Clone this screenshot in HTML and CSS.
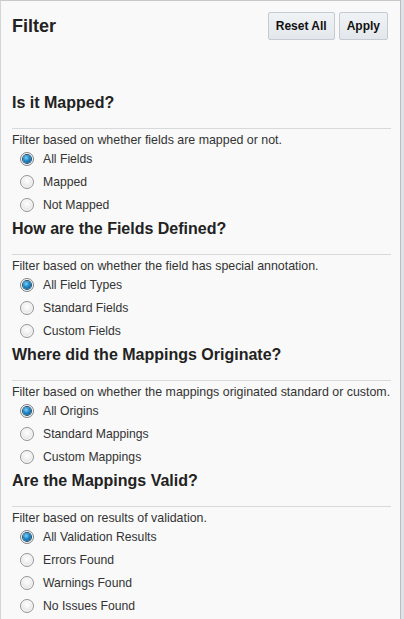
FILE: index.html
```html
<!DOCTYPE html>
<html>
<head>
<meta charset="utf-8">
<link rel="stylesheet" href="styles.css">
</head>
<body>
<div class="panel">
  <div class="header">
    <h1 class="title">Filter</h1>
    <div class="actions">
      <button class="btn">Reset All</button>
      <button class="btn">Apply</button>
    </div>
  </div>

  <div class="section">
    <h2 class="heading">Is it Mapped?</h2>
    <div class="rule"></div>
    <p class="desc">Filter based on whether fields are mapped or not.</p>
    <ul class="options">
      <li class="option"><span class="radio checked"></span>All Fields</li>
      <li class="option"><span class="radio"></span>Mapped</li>
      <li class="option"><span class="radio"></span>Not Mapped</li>
    </ul>
  </div>

  <div class="section">
    <h2 class="heading">How are the Fields Defined?</h2>
    <div class="rule"></div>
    <p class="desc">Filter based on whether the field has special annotation.</p>
    <ul class="options">
      <li class="option"><span class="radio checked"></span>All Field Types</li>
      <li class="option"><span class="radio"></span>Standard Fields</li>
      <li class="option"><span class="radio"></span>Custom Fields</li>
    </ul>
  </div>

  <div class="section">
    <h2 class="heading">Where did the Mappings Originate?</h2>
    <div class="rule"></div>
    <p class="desc">Filter based on whether the mappings originated standard or custom.</p>
    <ul class="options">
      <li class="option"><span class="radio checked"></span>All Origins</li>
      <li class="option"><span class="radio"></span>Standard Mappings</li>
      <li class="option"><span class="radio"></span>Custom Mappings</li>
    </ul>
  </div>

  <div class="section">
    <h2 class="heading">Are the Mappings Valid?</h2>
    <div class="rule"></div>
    <p class="desc">Filter based on results of validation.</p>
    <ul class="options">
      <li class="option"><span class="radio checked"></span>All Validation Results</li>
      <li class="option"><span class="radio"></span>Errors Found</li>
      <li class="option"><span class="radio"></span>Warnings Found</li>
      <li class="option"><span class="radio"></span>No Issues Found</li>
    </ul>
  </div>
</div>
</body>
</html>
```

FILE: styles.css
```css
html, body {
  margin: 0;
  padding: 0;
  background: #dfe3e7;
  height: 100%;
  overflow: hidden;
}
body {
  font-family: "Liberation Sans", Arial, sans-serif;
  color: #333;
}
.panel {
  width: 379px;
  height: 640px;
  background: #f9f9f9;
  border-top: 1px solid #c6cacd;
  border-left: 1px solid #d3d6d9;
  border-right: 1px solid #b9bec3;
  padding: 0 9px 0 11px;
}
.header {
  display: flex;
  align-items: center;
  justify-content: space-between;
  padding-top: 11px;
  margin-right: 3px;
  margin-bottom: 53px;
}
.title {
  margin: 0;
  font-size: 18px;
  line-height: 22px;
  font-weight: bold;
  color: #222;
}
.actions {
  display: flex;
  gap: 4px;
}
.btn {
  font-family: "Liberation Sans", Arial, sans-serif;
  font-size: 12px;
  font-weight: bold;
  color: #111;
  height: 28px;
  padding: 0 7px;
  border: 1px solid #c4cbd2;
  border-radius: 2px;
  background: linear-gradient(#f0f3f5, #e3e7eb);
}
.heading {
  margin: 3px 0 15px;
  font-size: 16px;
  line-height: 20px;
  font-weight: bold;
  color: #222;
}
.rule {
  border-top: 1px solid #d7dadd;
  margin-bottom: 4px;
}
.desc {
  margin: 0;
  font-size: 12.4px;
  line-height: 14px;
  color: #333;
  white-space: nowrap;
}
.options {
  list-style: none;
  margin: 0;
  padding: 0;
}
.option {
  display: flex;
  align-items: center;
  height: 23px;
  font-size: 12.2px;
  color: #333;
}
.radio {
  box-sizing: border-box;
  width: 14px;
  height: 14px;
  margin: 0 9px 0 8px;
  border-radius: 50%;
  border: 1px solid #959595;
  background: radial-gradient(circle at 50% 40%, #ffffff 0%, #f1f1f1 40%, #d2d2d2 100%);
  box-shadow: inset 0 0 0 1px #fafafa;
  display: flex;
  align-items: center;
  justify-content: center;
}
.radio.checked {
  border-color: #7f8488;
}
.radio.checked::after {
  content: "";
  width: 8px;
  height: 8px;
  border-radius: 50%;
  background: radial-gradient(circle at 40% 35%, #7fd2f7 0%, #1c86c6 45%, #0a4f86 100%);
  box-shadow: 0 0 0 1px #2a4f6a;
}
```
